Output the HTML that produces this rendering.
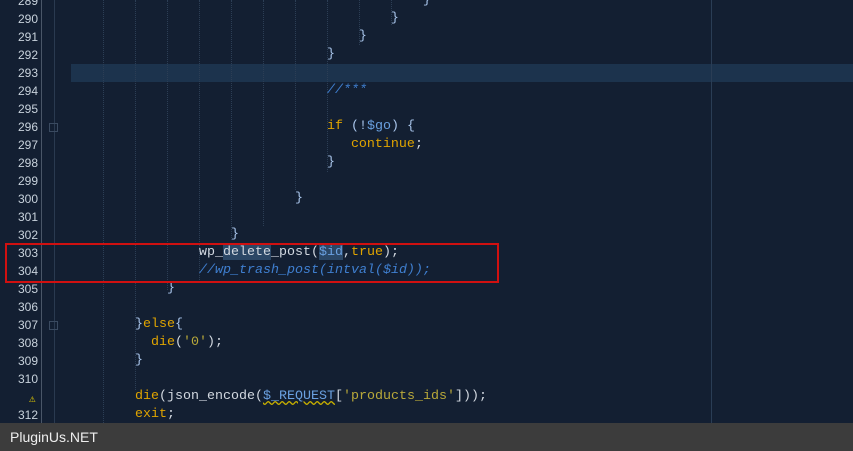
<!DOCTYPE html><html><head><style>
body{margin:0;width:853px;height:451px;overflow:hidden;background:#131f32;position:relative;font-family:"Liberation Mono",monospace;}
.ln{position:absolute;left:0;width:38px;text-align:right;color:#c8d2dc;font-size:12px;font-family:"Liberation Sans",sans-serif;}
.code{position:absolute;left:71px;white-space:pre;font-size:13.33px;color:#d2d8e0;line-height:18px;}
.g{position:absolute;top:0;height:423px;border-left:1px dotted #2c3e55;}
.k{color:#e0a400}.v{color:#6aa0e0}.c{color:#3f7fd0;font-style:italic}.b{color:#a8c4ea}.s{color:#b8a83a}
</style></head><body>
<div style="position:absolute;left:71px;top:64px;width:782px;height:18px;background:#1c334d"></div>
<div style="position:absolute;left:41px;top:0;width:1px;height:423px;background:#4a5668"></div>
<div style="position:absolute;left:54px;top:0;width:1px;height:423px;background:#2a3a50"></div>
<div style="position:absolute;left:711px;top:0;width:1px;height:423px;background:#2a3d55"></div>
<div class="g" style="left:103px"></div><div class="g" style="left:135px;height:390px"></div><div class="g" style="left:167px;height:290px"></div><div class="g" style="left:199px;height:280px"></div><div class="g" style="left:231px;height:240px"></div><div class="g" style="left:263px;height:226px"></div><div class="g" style="left:295px;height:190px"></div><div class="g" style="left:327px;height:172px"></div><div class="g" style="left:359px;height:45px"></div><div class="g" style="left:391px;height:25px"></div>
<div style="position:absolute;left:49px;top:123px;width:9px;height:9px;border:1px solid #3a4a60;box-sizing:border-box"></div>
<div style="position:absolute;left:49px;top:321px;width:9px;height:9px;border:1px solid #3a4a60;box-sizing:border-box"></div>
<div class="ln" style="top:-6px">289</div><div class="ln" style="top:12px">290</div><div class="ln" style="top:30px">291</div><div class="ln" style="top:48px">292</div><div class="ln" style="top:66px">293</div><div class="ln" style="top:84px">294</div><div class="ln" style="top:102px">295</div><div class="ln" style="top:120px">296</div><div class="ln" style="top:138px">297</div><div class="ln" style="top:156px">298</div><div class="ln" style="top:174px">299</div><div class="ln" style="top:192px">300</div><div class="ln" style="top:210px">301</div><div class="ln" style="top:228px">302</div><div class="ln" style="top:246px">303</div><div class="ln" style="top:264px">304</div><div class="ln" style="top:282px">305</div><div class="ln" style="top:300px">306</div><div class="ln" style="top:318px">307</div><div class="ln" style="top:336px">308</div><div class="ln" style="top:354px">309</div><div class="ln" style="top:372px">310</div><div style="position:absolute;left:29px;top:392px;color:#e8d000;font-size:11px">⚠</div><div class="ln" style="top:408px">312</div>
<div class="code" style="top:-8px"><span class="b">                                            }</span>
<span class="b">                                        }</span>
<span class="b">                                    }</span>
<span class="b">                                }</span>

                                <span class="c">//***</span>

                                <span class="k">if</span> <span class="b">(!</span><span class="v">$go</span><span class="b">) {</span>
                                   <span class="k">continue</span>;
<span class="b">                                }</span>

<span class="b">                            }</span>

<span class="b">                    }</span>
                wp_<span style="background:#2b4766">delete</span>_post(<span class="v" style="background:#2b4766">$id</span>,<span class="k">true</span>);
                <span class="c">//wp_trash_post(intval($id));</span>
<span class="b">            }</span>

<span class="b">        }</span><span class="k">else</span><span class="b">{</span>
          <span class="k">die</span>(<span class="s">'0'</span>);
<span class="b">        }</span>

        <span class="k">die</span>(json_encode(<span class="v" style="text-decoration:underline wavy #c8b000">$_REQUEST</span>[<span class="s">'products_ids'</span>]));
        <span class="k">exit</span>;</div>
<div style="position:absolute;left:5px;top:243px;width:494px;height:40px;border:2px solid #d01010;box-sizing:border-box"></div>
<div style="position:absolute;left:0;top:423px;width:853px;height:28px;background:#3c3c3c;color:#eee;font-family:'Liberation Sans',sans-serif;font-size:14px;line-height:28px;padding-left:10px;box-sizing:border-box">PluginUs.NET</div>
</body></html>
